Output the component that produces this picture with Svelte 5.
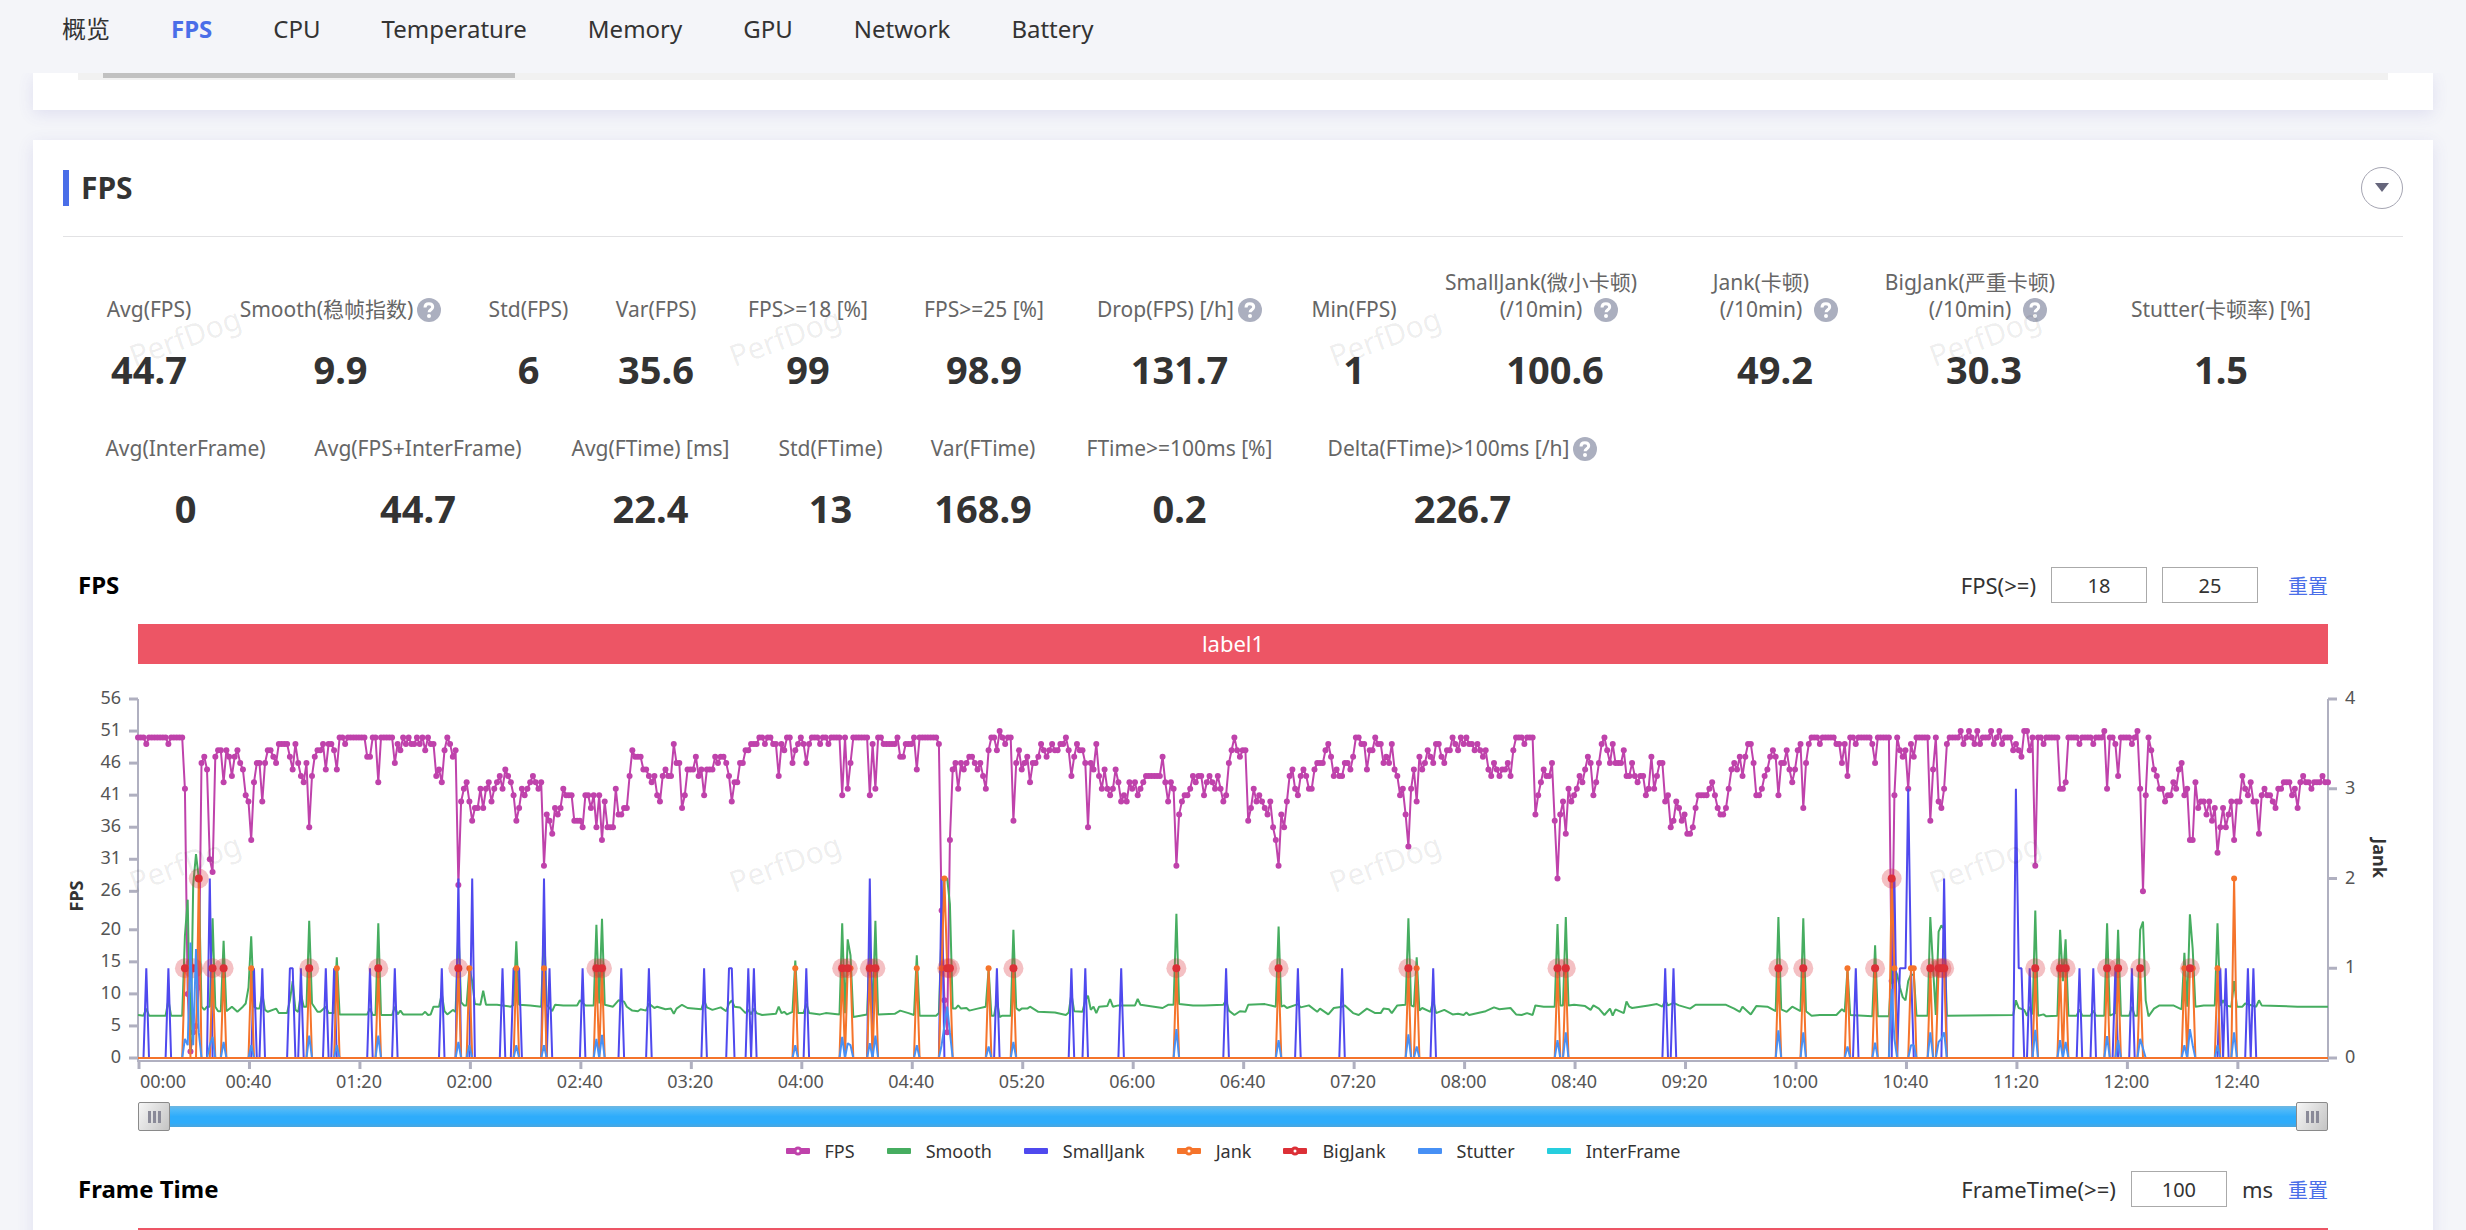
<script>
  const tabs = ['概览', 'FPS', 'CPU', 'Temperature', 'Memory', 'GPU', 'Network', 'Battery'];
  let activeTab = 'FPS';

  // basis is the preferred width of the cell, cells shrink on narrow screens
  const metricRows = [
    [
      { label: 'Avg(FPS)', value: '44.7', basis: 134 },
      { label: 'Smooth(稳帧指数)', value: '9.9', basis: 249, help: true },
      { label: 'Std(FPS)', value: '6', basis: 127 },
      { label: 'Var(FPS)', value: '35.6', basis: 128 },
      { label: 'FPS>=18 [%]', value: '99', basis: 176 },
      { label: 'FPS>=25 [%]', value: '98.9', basis: 176 },
      { label: 'Drop(FPS) [/h]', value: '131.7', basis: 215, help: true },
      { label: 'Min(FPS)', value: '1', basis: 134 },
      { top: 'SmallJank(微小卡顿)', label: '(/10min)', value: '100.6', basis: 268, help: true },
      { top: 'Jank(卡顿)', label: '(/10min)', value: '49.2', basis: 172, help: true },
      { top: 'BigJank(严重卡顿)', label: '(/10min)', value: '30.3', basis: 246, help: true },
      { label: 'Stutter(卡顿率) [%]', value: '1.5', basis: 228 }
    ],
    [
      { label: 'Avg(InterFrame)', value: '0', basis: 207 },
      { label: 'Avg(FPS+InterFrame)', value: '44.7', basis: 258 },
      { label: 'Avg(FTime) [ms]', value: '22.4', basis: 207 },
      { label: 'Std(FTime)', value: '13', basis: 153 },
      { label: 'Var(FTime)', value: '168.9', basis: 152 },
      { label: 'FTime>=100ms [%]', value: '0.2', basis: 241 },
      { label: 'Delta(FTime)>100ms [/h]', value: '226.7', basis: 325, help: true }
    ]
  ];

  const legend = [
    { name: 'FPS', color: '#bf42ab', dot: true },
    { name: 'Smooth', color: '#46ad60' },
    { name: 'SmallJank', color: '#4f49ee' },
    { name: 'Jank', color: '#f5742b', dot: true },
    { name: 'BigJank', color: '#dc3037', dot: true },
    { name: 'Stutter', color: '#4790f5' },
    { name: 'InterFrame', color: '#26cede' }
  ];

  const duration = 793;

  // One line per 40 seconds, "50*7" stands for seven samples of 50
  const fps = expand(`
    50*3 49 50*7 49 50*5 42 10 1 4 5 11 46 47 45 31 29 47 48 48 43 48 47 44 47 48 46 45 41
    40 34 43 46 46 40 46 48 48 47 46 49*4 47 45 49 46 44 43 46 36 44 47 48 48 49 45 49 49 48 45 50 50 49 50*4
    50*3 47 47 50 50 43 50*5 46 49 48 50 49 50 49 49 50 49 50 48 50 49 49 44 45 43 48 50 49 47 48 27 40 42 43
    40 37 39 39 42 39 42 43 40 42 43 44 42 45 44 43 41 37 39 42 41 42 43 44 43 42 43 30 38 37 35 39 38 39 42 41 41 41 37 37
    37 36 41 41 39 41 36 41 34 40 36 36 36 42 38 38 39 39 44 48 47 47 47 45 45 44 43 44 41 40 44 45 44 44 49 46 46 39 41 45
    45 45 47 44 45 41 45 45 45 47 46 47 47 46 44 40 43 43 46 46 48 48 49 49 49 50 50 49 50 50 49 49 44 49 48 50 50 46 48 49
    50 49 46 49 50 50 50 49 50 50 49 50*4 41 50 42 46 50*6 41 49 42 50 50 49*5 50 47 47 49 49
    49 50 45 50*7 49 23 9 4 34 45 46 42 46 45 46 47 47 46 45 46 44 42 48 50 50 48 51 50 49 50 50 37 46 48
    45 46 47 43 46 46 47 49 48 47 48 49 48 48 49 49 50 48 44 47 49 48 48 46 36 46 45 49 44 42 45 42 41 42 45 43 40 41 40 43
    42 43 41 42 43 44*6 47 43 40 43 42 30 38 40 41 41 42 44 43 44 44 41 43 44 43 42 44 42 40 41 46 48 50 48 47
    48 48 37 39 42 40 41 40 39 38 40 36 34 30 38 36 40 44 45 42 41 44 45 44 42 42 45 46 46 46 48 49 47 44 45 44 44 46 46 45
    47 50 50 49 49 45 48 48 50 49 49 46 47 46 49 45 44 41 42 38 33 42 45 40 47 45 46 48 47 46 49 49 47 46 48 48 50 49 48 50
    49 50 49 49 48 49 48 47 48 45 44 46 45 44 45 45 46 44 48 50 50 50 49 50 50 50 38 41 43 45 44 44 46 37 28 38 40 35 42 40
    41 42 44 43 45 47 46 41 43 46 49 50 48 46 49 46 46 46 48 44 44 46 44 43 44 44 41 42 47 42 44 46 46 40 41 36 37 40 39 37
    38 35 35 36 39 41*4 42 43 41 39 38 38 39 42 45 46 45 47 44 47 49 49 46 41 41 42 44 45 47 48 47 41 46 46 48 45 43
    45 48 49 39 46 49 50*3 49 50*5 49 49 46 49 44 50 50 49 50*5 49 46 50*5 12 41 50 48 47
    48 42 49 47 50*5 37 45 50 40 39 42 49 50*4 51 49 50 51 50 49 51 49 50*3 51 49 50 51 49 50*3 48
    49 48 47 51 51 48 50 30 50 50 49 50*5 42 42 43 50*4 49 50*4 49 50*3 51 42 50 50 49 44 50 50
    50 50 49 50 51 42 26 41 50 48 45 44 42 42 40 41 41 43 42 45 46 41 42 34 34 43 39 40 40 38 40 37 39 32 36 39 36 38 40 34
    40 40 44 42 41 43 40 40 35 41 42 41 41 40 39 42 42 43 43 43 41 42 39 43 44 43 43 42 43*3 44 43 43
  `).slice(0, duration + 1);

  // Turning points as second:value
  const smooth = pairs(`
    0:6.7 2:6.6 3:7.7 4:6.6 10:6.6 11:9 12:6.6 16:6.6 17:19 18:24.7 19:1 20:27 21:31.8 22:28 23:8 24:7.5 25:8 26:8 27:21.8 28:8 29:7.3
    30:7.3 31:18.3 32:7.3 34:8 36:7.2 38:8 39:8.5 40:11 41:19 42:8 43:7.7 44:7.7 45:10 46:7.5 47:7.2 50:7.7 51:7 54:7 55:9 56:12
    57:7.5 58:7.2 59:10 60:8 61:8 62:21.4 63:8.5 65:7.2 66:7.2 68:8 69:7 71:7 72:15.7 73:6.8 83:6.8 84:7.7 85:6.7 86:6.7 87:21
    88:6.7 92:6.7 93:8 94:6.8 95:7.4 96:6.8 103:6.8 104:7.2 105:6.7 106:6.8 107:8 109:8 110:10 111:7.3 112:6.8 114:7.5 115:7.2
    116:20 117:8.7 118:8.2 119:8.2 120:14 121:12 122:8.4 124:8.3 125:10.5 126:8.3 130:8.3 135:8 136:8.3 137:18.2 138:8.3 142:8.2
    146:8 147:20.5 148:8.3 150:7.3 151:8.3 154:8.2 159:8.2 160:9 162:8.2 165:8.2 166:20.8 167:8.5 168:21.7 169:8.3 172:8 174:9
    176:8.8 177:8 179:7.4 181:7.3 182:7.6 184:7.4 185:8.5 187:7.8 188:8 191:7.6 193:7.7 194:6.9 195:7.7 197:8.3 199:7.8 204:7.6
    205:9 206:7.9 208:7.5 211:7.9 213:7.3 214:8.5 215:9 216:8 218:7.9 220:7 221:7.5 222:6.8 223:7.7 224:7 226:6.7 231:6.9 232:8
    233:7 234:7.2 235:6.8 237:7.2 238:15.2 239:7 241:7 242:8.5 243:7 247:6.8 249:7 254:6.8 255:21 256:7 257:18.5 258:16 259:6.4
    264:6.8 265:18 266:7 267:21.4 268:6.8 274:6.9 276:7.4 279:7 281:6.7 282:16 283:6.6 289:6.6 290:7 291:20 292:28 293:28 294:24
    295:7.7 296:7.7 297:8.2 298:7.7 300:7.8 301:7.4 304:7.7 307:8 308:13.8 309:6.6 310:6.6 311:9 312:6.4 313:6.6 316:6.6 317:20
    318:7.8 319:7.4 320:7.7 322:7.7 323:8 326:7.2 332:7.1 336:6.7 337:7.1 338:10 339:7.3 342:7.2 343:9 344:9.7 345:7.5 346:8 347:7
    348:8 351:8.1 352:9.2 353:8 355:8.2 361:8.2 362:9.2 363:8.3 371:7.8 373:8.3 375:8.3 376:22.5 377:8.4 382:8.2 386:8.2 393:8.3
    394:9 395:7.4 397:6.7 399:7.3 401:7.2 402:8.3 408:8.4 412:8 413:20.5 414:8 415:8.2 416:7.8 420:8.4 421:7.9 424:8.2 427:7.2
    428:7.7 431:6.8 433:7.8 436:8 437:8.2 440:7 442:6.7 445:7.7 448:7 450:7 451:7.7 453:7.6 454:7 456:8.2 459:8.3 460:21.8 461:8.2
    462:8 463:15.7 464:7.4 465:7.8 468:7.2 469:9 470:7 473:7.5 476:6.8 478:6.9 480:6.7 481:7.1 482:6.7 488:7.3 491:7.9 493:7.6
    497:7.8 499:6.8 501:6.7 503:7 505:6.7 506:8.2 509:8 513:8 514:20.9 515:8.2 516:8.2 517:22 518:8.2 520:8.3 524:8.1 526:7.5
    527:8.2 529:7.7 531:6.7 533:7.7 534:6.6 535:7.6 538:7 539:8.8 540:8 541:7.8 544:8 547:8.2 550:8.4 552:8 553:9 554:8.2 556:8.6
    558:8.2 562:7.7 564:8.3 575:8.3 578:7.7 580:7.2 581:8 584:6.8 586:8.1 590:8 593:7.3 594:22 595:7.6 597:7.2 599:8 602:7.3
    603:21.8 604:7.3 606:6.6 609:6.7 615:6.7 617:7.6 618:7.2 619:13.8 620:6.7 628:6.5 629:17.6 630:6.5 634:6.5 635:14 636:14
    637:13 638:11 639:9.5 640:9 641:12 642:13 643:13 644:6.6 648:6.6 649:22 650:14 651:6.7 652:19.7 653:20.7 654:20 655:6.6
    679:6.7 680:9 681:7.8 683:7.5 684:6.6 685:8 686:6.8 687:23 688:6.6 690:6.8 691:6.5 695:6.6 696:20 697:12 698:18.5 699:6.6
    702:6.6 703:7.6 704:6.6 707:6.6 708:7.4 709:6.6 712:6.6 713:21 714:6.6 716:7 717:20 718:6.6 721:6.6 722:8 723:6.6 724:6.6
    725:20 726:21.3 727:9 728:6.5 730:7.7 732:8.2 737:8.2 740:7.6 741:16.4 742:8 743:22.4 744:17 745:8 748:8.2 752:8.2 753:21
    754:8.2 755:9 756:8.2 758:8 759:12 760:8 762:8 763:8.5 767:8 768:9 769:8.2 782:8 793:8
  `);

  // Sparse series as second:value, every other second is 0
  const smallJank = pairs(`
    3:1 11:1 26:2 42:1 45:1 55:1 56:1 59:1 68:1 71:1 84:1 93:1 110:1 116:2 121:2 132:1 136:1 137:1 138:1 147:2 149:1 161:1 175:1
    185:1 205:1 214:1 215:1 221:1 223:1 242:1 265:2 291:2 311:1 338:1 343:1 356:1 394:1 420:1 436:1 469:1 553:1 556:1 622:1 636:2
    638:1 639:1 640:1 641:3 642:1 654:2 680:3 681:1 682:1 685:1 703:1 708:1 716:1 722:1 754:1 756:1 764:1 766:1
  `);
  const jank = pairs(`
    17:1 18:1 22:2 27:1 31:1 41:1 62:1 72:1 87:1 116:1 120:1 137:1 147:1 166:1 168:1 238:1 255:1 257:1 258:1 265:1 267:1 282:1
    291:1 292:2 293:1 294:1 308:1 317:1 376:1 413:1 460:1 463:1 514:1 517:1 594:1 603:1 619:1 629:1 635:2 636:1 642:1 643:1 649:1
    652:1 653:1 654:1 687:1 696:1 698:1 713:1 717:1 725:1 741:1 743:1 744:1 753:1 759:2
  `);
  const bigJank = pairs(`
    17:1 20:1 22:2 27:1 31:1 62:1 87:1 116:1 166:1 168:1 255:1 257:1 265:1 267:1 293:1 294:1 317:1 376:1 413:1 460:1 514:1
    517:1 594:1 603:1 629:1 635:2 649:1 652:1 653:1 654:1 687:1 696:1 698:1 713:1 717:1 725:1 743:1
  `);
  const stutter = pairs(`
    17:3 18:2 19:18 20:2 21:17 22:4 26:2 27:3.3 31:2.5 41:2 62:3.5 72:2 87:3.5 116:2.5 120:2 137:2 147:2 166:3 168:3.6 238:2
    255:3.3 257:2.3 258:2 265:2.3 267:3.5 282:2 291:2 292:5 293:8 294:4 308:1.8 317:2.5 376:4.5 413:2.8 460:3.7 463:1.8 514:2.8
    517:4 594:4.3 603:4 619:1.8 629:2.4 635:10.8 636:3 642:2 643:2 649:4 652:2.5 653:3 654:4 687:4.4 696:2.8 698:2.5 713:3.4
    717:2.8 725:3 726:1.5 741:2 743:4.5 744:2 753:2 759:4
  `);

  const plotHeight = 359;
  const leftTicks = [0, 5, 10, 15, 20, 26, 31, 36, 41, 46, 51, 56];
  const rightTicks = [0, 1, 2, 3, 4];
  const timeTicks = Array.from({ length: 20 }, (_, i) => i * 40);
  const watermarks = [185, 785, 1385, 1985];

  let chartWidth = 2310;
  const left = 60;
  const top = 23;
  const bottom = top + plotHeight;

  $: right = chartWidth - 60;
  $: x = (t) => left + (t / duration) * (right - left);
  const y = (v) => bottom - (v / 56) * plotHeight;
  const yJank = (v) => bottom - (v / 4) * plotHeight;

  $: fpsLine = fps.map((v, t) => `${x(t).toFixed(1)},${y(v).toFixed(1)}`).join(' ');
  $: smoothLine = smooth.map(([t, v]) => `${x(t).toFixed(1)},${y(v).toFixed(1)}`).join(' ');
  $: smallJankLine = sparseLine(smallJank, x, yJank);
  $: jankLine = sparseLine(jank, x, yJank);
  $: stutterLine = sparseLine(stutter, x, y);

  function expand(text) {
    return text.trim().split(/\s+/).flatMap((token) => {
      const [value, count = 1] = token.split('*').map(Number);
      return Array(count).fill(value);
    });
  }

  function pairs(text) {
    return text.trim().split(/\s+/).map((token) => token.split(':').map(Number));
  }

  // Fill the seconds between the spikes with zeros
  function sparseLine(points, sx, sy) {
    const values = Array(duration + 1).fill(0);
    for (const [t, v] of points) values[t] = v;
    return values.map((v, t) => `${sx(t).toFixed(1)},${sy(v).toFixed(1)}`).join(' ');
  }

  function formatTime(s) {
    return `${String(Math.floor(s / 60)).padStart(2, '0')}:${String(s % 60).padStart(2, '0')}`;
  }

  let fpsLow = 18;
  let fpsHigh = 25;
  let frameTime = 100;

  function resetFps() {
    fpsLow = 18;
    fpsHigh = 25;
  }
</script>

<div class="page">
  <nav class="tabs">
    {#each tabs as tab}
      <a href="#{tab}" class:active={tab === activeTab} on:click={() => (activeTab = tab)}>{tab}</a>
    {/each}
  </nav>

  <main>
    <section class="card previous">
      <div class="scroll-track"><div class="scroll-thumb"></div></div>
    </section>

    <section class="card">
      <header class="card-header">
        <h2>FPS</h2>
        <button class="collapse" aria-label="Collapse">
          <svg width="16" height="10" viewBox="0 0 16 10"><path d="M1 0h14L8 9z" fill="#66667c" /></svg>
        </button>
      </header>

      <div class="metrics">
        {#each metricRows as row}
          <div class="metric-row">
            {#each row as metric}
              <div class="metric" style="flex-basis: {metric.basis}px">
                {#if metric.top}
                  <div class="metric-top">{metric.top}</div>
                {/if}
                <div class="metric-label" class:spaced={metric.top}>
                  <span>{metric.label}</span>
                  {#if metric.help}
                    <svg class="help" width="24" height="24" viewBox="0 0 24 24">
                      <circle cx="12" cy="12" r="12" fill="#abafbf" />
                      <path d="M8 9.5c0-2.4 1.6-3.8 3.9-3.8s3.8 1.4 3.8 3.3c0 2.7-3.6 2.8-3.6 5.3" fill="none" stroke="#fff" stroke-width="3" />
                      <circle cx="12" cy="18" r="2" fill="#fff" />
                    </svg>
                  {/if}
                </div>
                <div class="metric-value">{metric.value}</div>
              </div>
            {/each}
          </div>
        {/each}
      </div>

      <div class="chart-header">
        <h3>FPS</h3>
        <div class="controls">
          <label for="fps-low">FPS(&gt;=)</label>
          <input id="fps-low" type="text" bind:value={fpsLow} />
          <input type="text" aria-label="FPS upper threshold" bind:value={fpsHigh} />
          <a href="#reset" class="reset" on:click|preventDefault={resetFps}>重置</a>
        </div>
      </div>
      <div class="label-bar">label1</div>

      <div class="chart" bind:clientWidth={chartWidth}>
        <svg width={chartWidth} height="422">
          <g class="axis">
            <path class="frame" d="M{left} {top}V{bottom + 3}H{right}V{top}" />
            {#each leftTicks as v}
              <path d="M{left - 9} {y(v)}H{left}" />
              <text x={left - 17} y={y(v) + 5} text-anchor="end">{v}</text>
            {/each}
            {#each rightTicks as v}
              <path d="M{right} {yJank(v)}H{right + 9}" />
              <text x={right + 17} y={yJank(v) + 5}>{v}</text>
            {/each}
            {#each timeTicks as t}
              <path d="M{x(t) + 1} {bottom + 3}v8" />
              <text x={t === 0 ? left + 25 : x(t)} y={bottom + 30} text-anchor="middle">{formatTime(t)}</text>
            {/each}
          </g>
          <text class="axis-name" text-anchor="middle" transform="translate(5 {top + 197}) rotate(-90)">FPS</text>
          <text class="axis-name" text-anchor="middle" transform="translate({right + 45} {top + 159}) rotate(90)">Jank</text>

          <polyline points={fpsLine} stroke="#bf42ab" />
          {#each fps as v, t}
            <circle cx={x(t)} cy={y(v)} r="3" fill="#bf42ab" />
          {/each}
          <polyline points={smoothLine} stroke="#46ad60" />
          <polyline points={smallJankLine} stroke="#4f49ee" />
          <polyline points={jankLine} stroke="#f5742b" />
          {#each jank as [t, v]}
            <circle cx={x(t)} cy={yJank(v)} r="3" fill="#f5742b" />
          {/each}
          {#each bigJank as [t, v]}
            <circle cx={x(t)} cy={yJank(v)} r="10" fill="#dc3037" fill-opacity="0.3" />
            <circle cx={x(t)} cy={yJank(v)} r="4" fill="#dc3037" />
          {/each}
          <polyline points={stutterLine} stroke="#4790f5" />
          <path d="M{left} {bottom}H{right}" stroke="#f5742b" stroke-width="2" />
        </svg>
      </div>

      <div class="range">
        <button class="handle" aria-label="Range start"><i></i><i></i><i></i></button>
        <button class="handle" aria-label="Range end"><i></i><i></i><i></i></button>
      </div>

      <ul class="legend">
        {#each legend as item}
          <li>
            <svg width="24" height="12" viewBox="0 0 24 12">
              <rect y="3" width="24" height="6" rx="1" fill={item.color} />
              {#if item.dot}
                <circle cx="12" cy="6" r="3" fill="#fff" stroke={item.color} stroke-width="3" />
              {/if}
            </svg>
            <span>{item.name}</span>
          </li>
        {/each}
      </ul>

      <div class="chart-header">
        <h3>Frame Time</h3>
        <div class="controls">
          <label for="frame-time">FrameTime(&gt;=)</label>
          <input id="frame-time" type="text" bind:value={frameTime} />
          <span>ms</span>
          <a href="#reset" class="reset frame" on:click|preventDefault={() => (frameTime = 100)}>重置</a>
        </div>
      </div>
      <div class="label-bar"></div>
    </section>
  </main>

  <div class="watermarks" aria-hidden="true">
    {#each [337, 863] as wy}
      {#each watermarks as wx}
        <span style="left: {wx}px; top: {wy}px">PerfDog</span>
      {/each}
    {/each}
  </div>
</div>

<style>
  :global(body) {
    margin: 0;
  }
  .page {
    position: relative;
    height: 100vh;
    overflow: hidden;
    background: #f4f5f9;
    color: #333;
    font-family: "Noto Sans", "Noto Sans CJK SC", sans-serif;
    font-size: 20px;
  }
  .tabs {
    display: flex;
    gap: 61px;
    height: 73px;
    padding: 0 62px;
    box-sizing: border-box;
  }
  .tabs a {
    color: #333;
    font-size: 24px;
    line-height: 58px;
    text-decoration: none;
    white-space: nowrap;
  }
  .tabs a.active {
    color: #4a6ee8;
    font-weight: bold;
  }
  main {
    display: flex;
    flex-direction: column;
    gap: 30px;
    padding: 0 33px;
  }
  .card {
    padding: 0 30px;
    background: #fff;
    box-shadow: 0 4px 16px rgba(80, 70, 180, 0.12);
  }
  .previous {
    height: 37px;
    padding: 0 45px;
    clip-path: inset(0 -30px -30px -30px);
  }
  .scroll-track {
    height: 7px;
    background: #f1f1f1;
  }
  .scroll-thumb {
    width: 412px;
    height: 5px;
    margin-left: 25px;
    background: #c1c1c1;
  }
  .card-header {
    display: flex;
    align-items: center;
    justify-content: space-between;
    height: 96px;
    border-bottom: 1px solid #e2e2e4;
  }
  h2 {
    margin: 0;
    padding-left: 12px;
    border-left: 6px solid #4a6ee8;
    font-size: 30px;
    line-height: 36px;
  }
  .collapse {
    display: flex;
    align-items: center;
    justify-content: center;
    width: 42px;
    height: 42px;
    padding: 0;
    border: 1px solid #a5a5b2;
    border-radius: 50%;
    background: #fff;
  }
  .metrics {
    padding: 32px 19px 0;
  }
  .metric-row {
    display: flex;
    align-items: flex-end;
  }
  .metric-row + .metric-row {
    margin-top: 40px;
  }
  .metric {
    flex: 0 1 auto;
    text-align: center;
    white-space: nowrap;
  }
  .metric-top,
  .metric-label {
    color: #666;
    font-size: 21px;
    line-height: 27px;
  }
  .metric-top {
    padding-right: 28px;
  }
  .metric-label {
    display: flex;
    align-items: center;
    justify-content: center;
    gap: 4px;
  }
  .metric-label.spaced {
    gap: 12px;
    padding-left: 8px;
  }
  .metric-value {
    margin-top: 20px;
    font-size: 38px;
    font-weight: bold;
    line-height: 52px;
  }
  .chart-header {
    display: flex;
    align-items: center;
    justify-content: space-between;
    height: 36px;
    padding: 0 75px 0 15px;
  }
  .metrics + .chart-header {
    margin-top: 33px;
  }
  h3 {
    margin: 0;
    color: #000;
    font-size: 24px;
    line-height: 36px;
  }
  .controls {
    display: flex;
    align-items: center;
    gap: 15px;
  }
  .controls label,
  .controls span {
    font-size: 22px;
  }
  .controls input {
    width: 96px;
    height: 36px;
    box-sizing: border-box;
    border: 1px solid #aaa;
    background: #fff;
    color: #333;
    font: inherit;
    text-align: center;
  }
  .reset {
    margin-left: 15px;
    color: #4a6ee8;
    text-decoration: none;
  }
  .reset.frame {
    margin-left: 0;
  }
  .label-bar {
    height: 40px;
    margin: 21px 75px 0;
    background: #ed5565;
    color: #fff;
    font-size: 22px;
    line-height: 38px;
    text-align: center;
  }
  .chart {
    margin: 12px 15px 0;
    height: 426px;
  }
  .chart svg {
    display: block;
    overflow: visible;
  }
  .chart polyline {
    fill: none;
    stroke-width: 2;
    stroke-linejoin: bevel;
  }
  .axis path {
    fill: none;
    stroke: #b0b0c0;
    stroke-width: 3;
  }
  .axis .frame {
    stroke-width: 2;
  }
  .axis text {
    fill: #555;
    font-size: 18px;
  }
  .axis-name {
    fill: #333;
    font-size: 18px;
    font-weight: bold;
  }
  .range {
    display: flex;
    align-items: center;
    justify-content: space-between;
    height: 29px;
    margin: 0 75px;
    background: linear-gradient(#6fb6e0, #4db8f8 20%, #2eacfb 50%, #2eacfb 80%, #4aa5dd) center / 100% 21px no-repeat;
  }
  .handle {
    display: flex;
    align-items: center;
    justify-content: center;
    gap: 2px;
    width: 32px;
    height: 29px;
    padding: 0;
    border: 1px solid #8a8a8a;
    border-radius: 2px;
    background: linear-gradient(120deg, #f6f6f6, #c4c4c4);
  }
  .handle i {
    width: 3px;
    height: 12px;
    background: #8a8a98;
  }
  .legend {
    display: flex;
    justify-content: center;
    gap: 32px;
    margin: 5px 0;
    padding: 0;
    list-style: none;
    font-size: 18px;
    line-height: 30px;
  }
  .legend li {
    display: flex;
    align-items: center;
    gap: 15px;
  }
  .watermarks span {
    position: absolute;
    color: rgba(0, 0, 0, 0.08);
    font-size: 30px;
    line-height: 40px;
    transform: translate(-50%, -50%) rotate(-20deg);
    pointer-events: none;
  }
</style>
